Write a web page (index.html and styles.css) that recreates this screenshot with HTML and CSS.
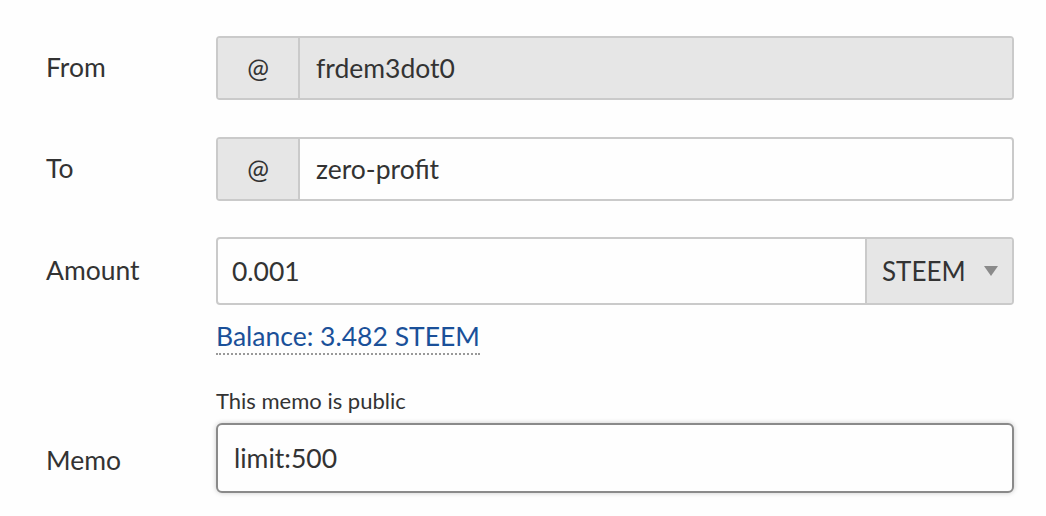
FILE: index.html
```html
<!DOCTYPE html>
<html lang="en">
<head>
<meta charset="utf-8">
<title>Transfer</title>
<link rel="stylesheet" href="styles.css">
</head>
<body>
<form class="transfer">
  <div class="row row-from">
    <label class="label">From</label>
    <div class="field group">
      <span class="addon">@</span>
      <span class="input disabled">frdem3dot0</span>
    </div>
  </div>
  <div class="row row-to">
    <label class="label">To</label>
    <div class="field group">
      <span class="addon">@</span>
      <span class="input">zero-profit</span>
    </div>
  </div>
  <div class="row row-amount">
    <label class="label">Amount</label>
    <div class="field group tall">
      <span class="input amount">0.001</span>
      <span class="select">STEEM<span class="caret"></span></span>
    </div>
  </div>
  <div class="row row-balance">
    <span class="label"></span>
    <a class="balance">Balance: 3.482 STEEM</a>
  </div>
  <div class="row row-note">
    <span class="label"></span>
    <span class="note">This memo is public</span>
  </div>
  <div class="row row-memo">
    <label class="label memo-label">Memo</label>
    <div class="field memo">
      <span class="input">limit:500</span>
    </div>
  </div>
</form>
</body>
</html>
```
FILE: styles.css
```css
html, body {
  margin: 0;
  padding: 0;
  background: #fefefe;
}
body {
  font-family: "Lato", "Open Sans", sans-serif;
  color: #333;
  width: 1046px;
  height: 516px;
  overflow: hidden;
}
.transfer {
  display: flex;
  flex-direction: column;
  padding: 36px 32px 0 46px;
}
.row {
  display: flex;
  align-items: center;
}
.label {
  width: 170px;
  flex: none;
  font-size: 26.5px;
  color: #333;
  padding-bottom: 3px;
}
.memo-label {
  padding-bottom: 0;
  padding-top: 4px;
}
.field {
  flex: 1;
  display: flex;
  border: 2px solid #cacaca;
  border-radius: 4px;
  height: 64px;
  box-sizing: border-box;
  overflow: hidden;
  background: #fefefe;
}
.field.tall {
  height: 68px;
}
.row-to {
  margin-top: 37px;
}
.row-amount {
  margin-top: 36px;
}
.addon {
  width: 80px;
  flex: none;
  background: #e6e6e6;
  border-right: 2px solid #cacaca;
  display: flex;
  align-items: center;
  justify-content: center;
  font-size: 26px;
  color: #333;
}
.input {
  flex: 1;
  display: flex;
  align-items: center;
  padding-left: 16px;
  font-size: 26.5px;
  color: #333;
}
.input.disabled {
  background: #e6e6e6;
}
.input.amount {
  padding-left: 14px;
}
.select {
  width: 147px;
  flex: none;
  background: #e6e6e6;
  border-left: 2px solid #cacaca;
  display: flex;
  align-items: center;
  padding-left: 15px;
  box-sizing: border-box;
  font-size: 26px;
  color: #333;
}
.caret {
  width: 0;
  height: 0;
  border-left: 7px solid transparent;
  border-right: 7px solid transparent;
  border-top: 10px solid #8a8a8a;
  margin-left: 18px;
}
.row-balance {
  margin-top: 14px;
}
.balance {
  font-size: 26.5px;
  color: #1a5099;
  line-height: 34px;
  border-bottom: 2px dotted #999;
  cursor: pointer;
}
.row-note {
  margin-top: 33px;
}
.note {
  font-size: 22px;
  color: #333;
  line-height: 26px;
}
.row-memo {
  margin-top: 9px;
}
.field.memo {
  height: 70px;
  border-color: #8a8a8a;
  border-radius: 6px;
  box-shadow: 0 0 5px #cacaca;
}
.memo .input {
  padding-left: 16px;
}
```
